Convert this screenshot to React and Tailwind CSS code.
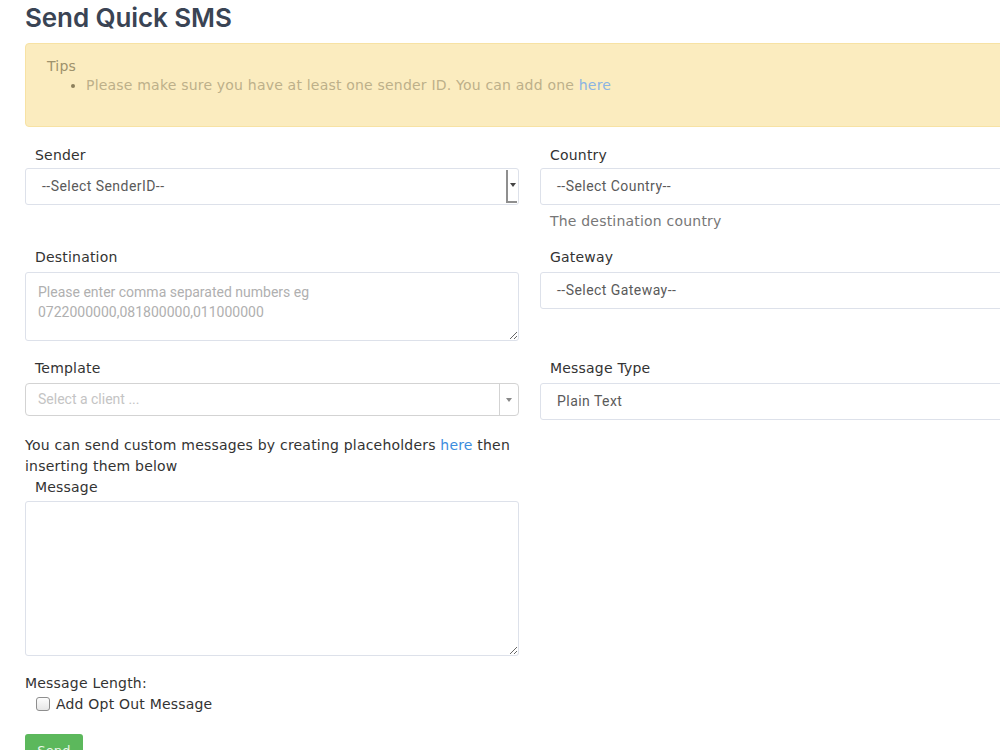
import React from "react";

const dv = "font-['DejaVu_Sans',sans-serif] tracking-[0.2px]";
const rb = "font-['Roboto',sans-serif]";

function Label({ children }) {
  return (
    <div className={`${dv} pl-[10px] text-[14px] leading-[18px] text-[#333]`}>{children}</div>
  );
}

function FakeSelect({ text, className = "", children }) {
  return (
    <div
      className={`relative flex h-[37px] items-center rounded-[3px] border border-[#dde1ea] bg-white pl-[16px] ${rb} text-[14px] tracking-[0.45px] text-[#5a5a5a] ${className}`}
    >
      {text}
      {children}
    </div>
  );
}

export default function App() {
  return (
    <div className="h-[750px] w-[1000px] overflow-hidden bg-white">
      <div className="w-[1040px] px-[25px]">
        <h1 className="font-['Inter',sans-serif] text-[26px] font-semibold leading-[36px] tracking-[-0.1px] text-[#3a4454]">
          Send Quick SMS
        </h1>

        <div className="mt-[7px] h-[84px] rounded-[4px] border border-[#f7e2a4] bg-[#fbecbf] pl-[21px] pt-[13px]">
          <div className={`${dv} text-[14px] leading-[18px] text-[#9e926c]`}>Tips</div>
          <ul className={`${dv} list-disc pl-[39px] text-[14px] leading-[20px] text-[#bdb08a] marker:text-[#8c805c]`}>
            <li>
              Please make sure you have at least one sender ID. You can add one{" "}
              <span className="text-[#8cb4e2]">here</span>
            </li>
          </ul>
        </div>

        {/* row 1 */}
        <div className="mt-[19px] grid grid-cols-[494px_1fr] gap-x-[21px]">
          <div>
            <Label>Sender</Label>
            <FakeSelect text="--Select SenderID--" className="mt-[4px]">
              <span className="absolute right-[1px] top-[1px] flex h-[33px] w-[11px] items-center justify-center border-b-2 border-l-2 border-[#8f8f8f] bg-white">
                <span className="mt-[-2px] h-0 w-0 border-x-[3px] border-t-[4px] border-x-transparent border-t-[#444]" />
              </span>
            </FakeSelect>
          </div>
          <div>
            <Label>Country</Label>
            <FakeSelect text="--Select Country--" className="mt-[4px]" />
            <div className={`${dv} mt-[7px] pl-[10px] text-[14px] leading-[18px] text-[#777]`}>
              The destination country
            </div>
          </div>
        </div>

        {/* row 2 */}
        <div className="mt-[18px] grid grid-cols-[494px_1fr] gap-x-[21px]">
          <div>
            <Label>Destination</Label>
            <textarea
              className={`mt-[6px] block h-[69px] w-full rounded-[3px] border border-[#dde1ea] px-[12px] pt-[9px] ${rb} text-[14px] leading-[20px] text-[#555] outline-none placeholder:text-[#b0b0b0]`}
              placeholder="Please enter comma separated numbers eg 0722000000,081800000,011000000"
            />
          </div>
          <div>
            <Label>Gateway</Label>
            <FakeSelect text="--Select Gateway--" className="mt-[6px]" />
          </div>
        </div>

        {/* row 3 */}
        <div className="mt-[18px] grid grid-cols-[494px_1fr] gap-x-[21px]">
          <div>
            <Label>Template</Label>
            <div className="mt-[6px] flex h-[33px] items-center rounded-[4px] border border-[#d3d3d3] bg-white">
              <span className={`flex-1 pl-[12px] ${rb} text-[14px] text-[#c4c4c4]`}>Select a client ...</span>
              <span className="flex h-full w-[19px] items-center justify-center border-l border-[#d3d3d3]">
                <span className="h-0 w-0 border-x-[3.5px] border-t-[4px] border-x-transparent border-t-[#888]" />
              </span>
            </div>
          </div>
          <div>
            <Label>Message Type</Label>
            <FakeSelect text="Plain Text" className="mt-[6px]" />
          </div>
        </div>

        <div className="w-[494px]">
          <p className={`${dv} mt-[15px] w-[500px] text-[14px] leading-[21px] text-[#333]`}>
            You can send custom messages by creating placeholders{" "}
            <span className="text-[#3c8dde]">here</span> then inserting them below
          </p>
          <div className="mt-[1px]">
            <Label>Message</Label>
          </div>
          <textarea className="mt-[5px] block h-[155px] w-full rounded-[3px] border border-[#dde1ea] outline-none" />

          <div className={`${dv} mt-[18px] text-[14px] leading-[18px] text-[#333]`}>Message Length:</div>
          <label className={`${dv} ml-[11px] mt-[3px] flex items-center gap-[6px] text-[14px] leading-[18px] text-[#333]`}>
            <span className="h-[14px] w-[14px] rounded-[3px] border border-[#8e8e8e] bg-gradient-to-b from-[#fdfdfd] to-[#e6e6e6]" />
            Add Opt Out Message
          </label>

          <button className={`${dv} mt-[21px] h-[34px] w-[58px] rounded-[3px] bg-[#5cb85c] text-[13px] text-[#e9f6e9]`}>
            Send
          </button>
        </div>
      </div>
    </div>
  );
}
